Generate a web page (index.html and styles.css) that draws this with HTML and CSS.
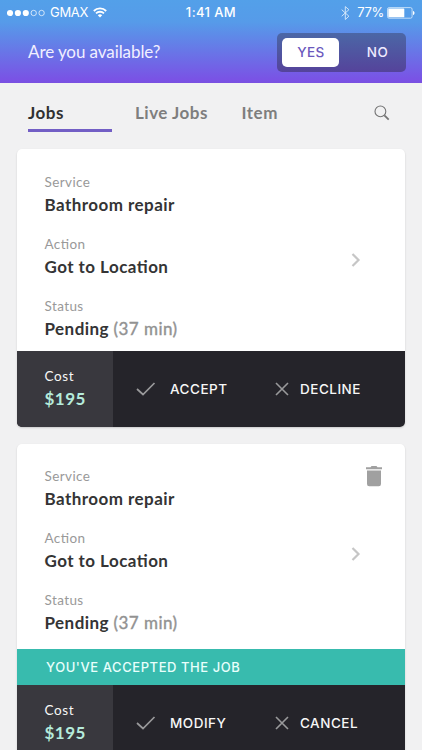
FILE: index.html
```html
<!DOCTYPE html>
<html lang="en">
<head>
<meta charset="utf-8">
<title>Jobs</title>
<link rel="stylesheet" href="styles.css">
</head>
<body>
<header class="header">
  <div class="status-bar">
    <div class="carrier">
      <svg width="38" height="8" viewBox="0 0 38 8" fill="#fff"><circle cx="3" cy="4" r="3.1"/><circle cx="10.9" cy="4" r="3.1"/><circle cx="18.8" cy="4" r="3.1"/><g fill="none" stroke="#fff" stroke-width=".7"><circle cx="26.7" cy="4" r="2.7"/><circle cx="34.6" cy="4" r="2.7"/></g></svg>
      <span class="carrier-name">GMAX</span>
      <svg class="wifi" width="14" height="11" viewBox="0 0 14 11" fill="none" stroke="#fff" stroke-width="1.8"><path d="M.8 4a8.8 8.8 0 0 1 12.4 0M3 6.4a5.7 5.7 0 0 1 8 0"/><path d="M4.8 8.2a3.2 3.2 0 0 1 4.4 0L7 10.5z" fill="#fff" stroke="none"/></svg>
    </div>
    <span class="time">1:41 AM</span>
    <div class="battery">
      <svg width="9" height="14" viewBox="0 0 9 14" fill="none" stroke="#dcecfb" stroke-width=".9"><path d="M.7 3.7l7.2 6.5-3.6 3.3V.6l3.6 3.1-7.2 6.5"/></svg>
      <span class="percent">77%</span>
      <svg width="28" height="12" viewBox="0 0 28 12"><rect x=".5" y=".6" width="24.6" height="10.6" rx="1.6" fill="none" stroke="#dcecfb" stroke-width=".8"/><rect x="1.3" y="1.5" width="16" height="8.8" rx=".6" fill="#fff"/><path d="M26 4c2 .4 2 3.500 0 4z" fill="#fff"/></svg>
    </div>
  </div>
  <div class="availability">
    <span class="question">Are you available?</span>
    <div class="toggle"><span class="option option-on">YES</span><span class="option">NO</span></div>
  </div>
</header>

<nav class="tabs">
  <span class="tab tab-active">Jobs</span>
  <span class="tab tab-live">Live Jobs</span>
  <span class="tab">Item</span>
  <svg class="search" width="16" height="16" viewBox="0 0 16 16" fill="none" stroke="#747474"><circle cx="6.400" cy="6.400" r="5.400" stroke-width="1.100"/><path d="M10.400 10.400l4.300 4.200" stroke-width="1.800"/></svg>
</nav>

<main class="cards">
  <section class="card">
    <div class="details">
      <div class="field"><span class="label">Service</span><span class="value">Bathroom repair</span></div>
      <div class="field"><span class="label">Action</span><span class="value">Got to Location</span></div>
      <div class="field"><span class="label">Status</span><span class="value">Pending <span class="muted">(37 min)</span></span></div>
      <svg class="chevron" width="10" height="14" viewBox="0 0 10 14" fill="none" stroke="#c6c6c6" stroke-width="2.200"><path d="M1.500 1l6 6-6 6"/></svg>
    </div>
    <footer class="footer">
      <div class="cost"><span class="cost-label">Cost</span><span class="cost-value">$195</span></div>
      <div class="action action-first">
        <svg width="20" height="14" viewBox="0 0 20 14" fill="none" stroke="#99999b" stroke-width="1.700"><path d="M1 7l6 5.500L18.500 1"/></svg>
        <span>ACCEPT</span>
      </div>
      <div class="action action-second">
        <svg width="14" height="14" viewBox="0 0 14 14" fill="none" stroke="#99999b" stroke-width="1.600"><path d="M1 1l12 12M13 1L1 13"/></svg>
        <span>DECLINE</span>
      </div>
    </footer>
  </section>

  <section class="card card-accepted">
    <div class="details">
      <div class="field"><span class="label">Service</span><span class="value">Bathroom repair</span></div>
      <div class="field"><span class="label">Action</span><span class="value">Got to Location</span></div>
      <div class="field"><span class="label">Status</span><span class="value">Pending <span class="muted">(37 min)</span></span></div>
      <svg class="trash" width="16" height="21" viewBox="0 0 16 21" fill="#a0a0a0"><path d="M0 1.200h4.500L5.500 0h5l1 1.200H16v2H0zM1 4.500h14V18a2.200 2.200 0 0 1-2.200 2.200H3.200A2.200 2.200 0 0 1 1 18z"/></svg>
      <svg class="chevron" width="10" height="14" viewBox="0 0 10 14" fill="none" stroke="#c6c6c6" stroke-width="2.200"><path d="M1.500 1l6 6-6 6"/></svg>
    </div>
    <div class="banner">YOU'VE ACCEPTED THE JOB</div>
    <footer class="footer">
      <div class="cost"><span class="cost-label">Cost</span><span class="cost-value">$195</span></div>
      <div class="action action-first">
        <svg width="20" height="14" viewBox="0 0 20 14" fill="none" stroke="#99999b" stroke-width="1.700"><path d="M1 7l6 5.500L18.500 1"/></svg>
        <span>MODIFY</span>
      </div>
      <div class="action action-second">
        <svg width="14" height="14" viewBox="0 0 14 14" fill="none" stroke="#99999b" stroke-width="1.600"><path d="M1 1l12 12M13 1L1 13"/></svg>
        <span>CANCEL</span>
      </div>
    </footer>
  </section>
</main>
</body>
</html>
```

FILE: styles.css
```css
* { box-sizing: border-box; }
body {
  margin: 0;
  width: 422px;
  height: 750px;
  overflow: hidden;
  background: #f1f1f2;
  font-family: Lato, sans-serif;
  color: #343435;
}
svg { display: block; flex: none; }

.header {
  height: 83px;
  background: linear-gradient(#53a0e9 0, #569be9 22px, #7a52e5 80px, #7950e1 100%);
  color: #fff;
}
.status-bar {
  display: grid;
  grid-template-columns: 1fr auto 1fr;
  align-items: center;
  height: 25px;
  padding: 0 7px;
  font: 13px/25px Inter, sans-serif;
}
.carrier, .battery { display: flex; align-items: center; }
.carrier-name { margin-left: 5px; letter-spacing: -.3px; }
.wifi { margin: -1px 0 0 5px; }
.time { font-weight: 500; font-size: 13px; letter-spacing: .4px; }
.battery { justify-content: flex-end; }
.percent { margin: 0 3px 0 7px; letter-spacing: -.3px; }

.availability {
  display: flex;
  align-items: center;
  justify-content: space-between;
  height: 54px;
  padding: 0 16px 2px 28px;
}
.question { font-size: 17px; letter-spacing: -.08px; color: #f1efff; }
.toggle {
  display: flex;
  width: 129px;
  height: 39px;
  margin-top: 2px;
  padding: 5px;
  border-radius: 5px;
  background: linear-gradient(#4b67a6, #55439b);
}
.option {
  flex: 1;
  padding-left: 15px;
  border-radius: 5px;
  font: 500 13.500px/29px Inter, sans-serif;
  letter-spacing: .4px;
  color: #eeeaff;
  text-align: center;
}
.option-on { flex: none; width: 57px; height: 29px; padding: 0 0 0 1px; background: #fff; color: #6b58bd; }

.tabs {
  display: flex;
  height: 66px;
  padding: 18px 32px 0 28px;
  font-weight: 700;
  font-size: 17px;
  line-height: 24px;
  letter-spacing: .5px;
  color: #7e7e7e;
}
.tab-active { width: 84px; height: 31px; border-bottom: 3px solid #725ec5; color: #303031; }
.tab-live { margin: 0 33.500px 0 23px; }
.search { margin: 4px 0 0 auto; }

.cards { display: flex; flex-direction: column; gap: 17px; padding: 0 17px; }
.card {
  overflow: hidden;
  flex: none;
  border-radius: 5px;
  background: #fff;
  box-shadow: 0 1px 2px rgba(0, 0, 0, .16);
}
.details {
  position: relative;
  display: flex;
  flex-direction: column;
  gap: 20px;
  height: 202px;
  padding: 25px 27.500px 0;
}
.card-accepted .details { height: 205px; padding-top: 24px; }
.field { display: flex; flex-direction: column; gap: 4px; font-feature-settings: "liga" 1; }
.label { font-size: 13.500px; line-height: 16px; letter-spacing: .4px; color: #999; }
.value { font-size: 17px; font-weight: 700; line-height: 22px; letter-spacing: .45px; white-space: nowrap; }
.muted { color: #929292; font-weight: 400; -webkit-text-stroke: .4px #929292; }
.chevron { position: absolute; top: 104px; right: 44px; }
.card-accepted .chevron { top: 103px; }
.trash { position: absolute; top: 22px; right: 23px; }

.banner {
  height: 36px;
  padding-left: 29px;
  background: #38bbae;
  color: #e8fffc;
  font: 500 13px/36px Inter, sans-serif;
  letter-spacing: .57px;
}
.footer { display: flex; height: 76px; background: #25242a; color: #f7f7f7; }
.cost {
  display: flex;
  flex-direction: column;
  gap: 3px;
  width: 95.500px;
  padding: 17px 0 0 27.500px;
  background: #39383e;
}
.cost-label { font-size: 13.500px; line-height: 17px; letter-spacing: .6px; }
.cost-value { font-size: 17px; font-weight: 700; line-height: 22px; letter-spacing: .5px; color: #b5ebdb; }
.action { display: flex; align-items: center; font: 500 13.500px/20px Inter, sans-serif; letter-spacing: .5px; }
.action-first { width: 162px; padding-left: 23.500px; gap: 14px; }
.action svg, .action span { margin-top: -1px; }
.action-second { gap: 11.500px; }
```
